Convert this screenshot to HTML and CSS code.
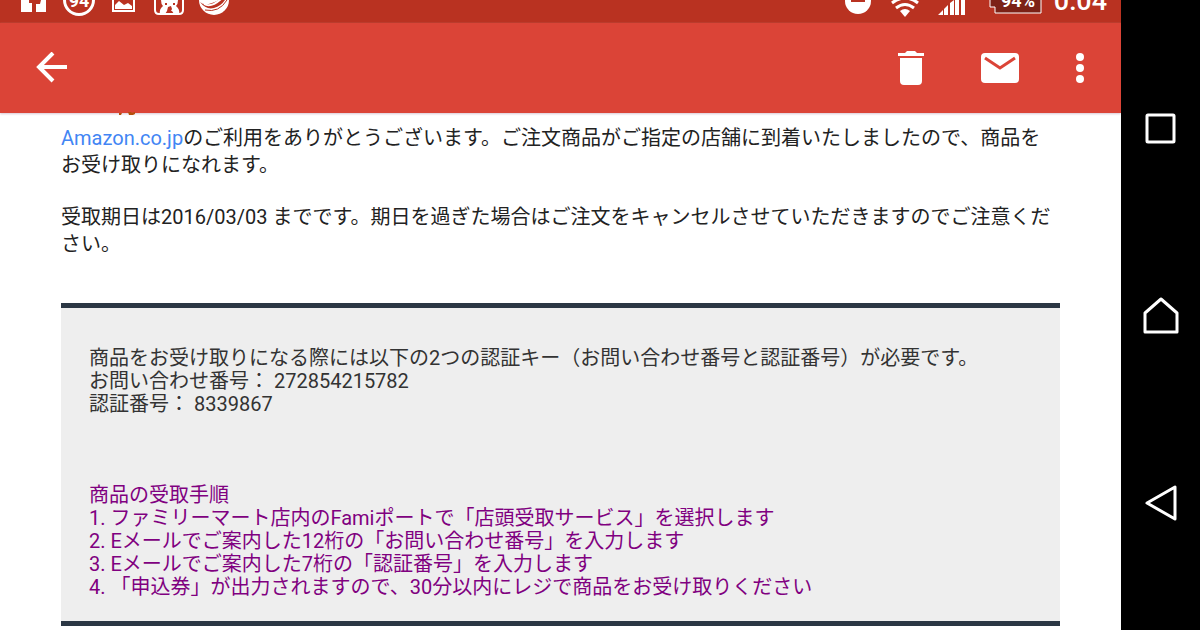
FILE: index.html
```html
<!DOCTYPE html>
<html lang="ja">
<head>
  <meta charset="UTF-8">
  <meta name="viewport" content="width=device-width, initial-scale=1.0">
  <title>Amazon.co.jp</title>
  <link rel="stylesheet" href="styles.css">
</head>
<body>
  <div class="screen">
    <div class="status-bar">
      <div class="notifications">
        <svg class="status-icon" viewBox="0 0 45 23">
          <path fill="#fff" d="M10 0h8v3h3v9H10zM25 12V4h4l1-4h5v12z"/>
        </svg>
        <svg class="status-icon" viewBox="0 0 45 23">
          <circle cx="23" cy="0" r="14.5" fill="none" stroke="#fff" stroke-width="3"/>
          <text class="badge-text" x="23" y="7" text-anchor="middle">94</text>
        </svg>
        <svg class="status-icon" viewBox="0 0 45 23">
          <path fill="none" stroke="#fff" stroke-width="2" d="M12 -8h21v19H12z"/>
          <path fill="#fff" d="M14 9V5l4-4 5 4 4-2 4 3v3z"/>
        </svg>
        <svg class="status-icon" viewBox="0 0 45 23">
          <path fill="none" stroke="#fff" stroke-width="2" d="M9 -4v14q0 4 4 4h20q4 0 4-4V-4"/>
          <path fill="#fff" d="M15 0h17q0 4-2 6 4 3 3 8h-5l-2-3h-5l-2 3h-5q-1-5 3-8-2-2-2-6z"/>
          <path fill="#b93221" d="M19 3h2v2h-2zM27 3h2v2h-2zM22 7l3-1 1 3-2 4-3-2z"/>
        </svg>
        <svg class="status-icon" viewBox="0 0 45 23">
          <circle cx="23" cy="0" r="15" fill="#fff"/>
          <path fill="#b93221" d="M9 2q4 4 12 1 8-3 10-5l3 2q-4 6-11 8-8 2-14-6z"/>
          <path fill="none" stroke="#b93221" stroke-width="1" d="M14 10q14 3 22-10"/>
          <path fill="none" stroke="#fff" stroke-width="2" d="M13 4q7 4 17-5"/>
        </svg>
      </div>
      <div class="system">
        <svg class="status-icon" viewBox="0 0 45 23">
          <circle cx="22" cy="1" r="13" fill="#fff"/>
          <path fill="#b93221" d="M15 -1h14v3H15z"/>
        </svg>
        <svg class="status-icon" viewBox="0 0 45 23">
          <path fill="#fff" d="M22 17l-5-6q5-4 10 0z"/>
          <path fill="none" stroke="#fff" stroke-width="3" d="M13 8q9-7 18 0M9 3q13-10 26 0"/>
        </svg>
        <svg class="status-icon" viewBox="0 0 45 23">
          <path fill="#fff" d="M8 15l5-5v5zM14 9l4-4v10h-4zM20 3l4-3v15h-4zM25 0h4v15h-4zM31 0h4v15h-4z"/>
        </svg>
        <svg class="battery-icon" viewBox="0 0 60 23">
          <path fill="#7c2116" stroke="#fff" stroke-width="1" d="M9 -1H4v8h5v6h46V-1"/>
          <text class="battery-text" x="32" y="7" text-anchor="middle">94%</text>
        </svg>
        <span class="clock">0:04</span>
      </div>
    </div>

    <header class="toolbar">
      <button class="tool" aria-label="戻る">
        <svg width="32" height="32" viewBox="0 0 32 32"><path fill="none" stroke="#fff" stroke-width="4" d="M32 15H5M18 1L4 15l14 14"/></svg>
      </button>
      <div class="actions">
        <button class="tool" aria-label="削除">
          <svg width="28" height="36" viewBox="0 0 28 36"><path fill="#fff" d="M1 3h7l2-2h8l2 2h7v3H1zM3 8h22v23q0 4-4 4H7q-4 0-4-4z"/></svg>
        </button>
        <button class="tool" aria-label="未読にする">
          <svg width="38" height="32" viewBox="0 0 38 32"><rect y="1" width="38" height="30" rx="4" fill="#fff"/><path fill="none" stroke="#db4437" stroke-width="3" d="M4 6l15 10L34 6"/></svg>
        </button>
        <button class="tool" aria-label="その他">
          <svg width="10" height="32" viewBox="0 0 10 32"><g fill="#fff"><circle cx="5" cy="5" r="4"/><circle cx="5" cy="16" r="4"/><circle cx="5" cy="27" r="4"/></g></svg>
        </button>
      </div>
      <!-- lower edge of the heading scrolled under the toolbar -->
      <svg class="scrolled-heading" viewBox="0 0 30 4"><path fill="#b5500c" d="M4 2h3l-1 2H4zM13 1h3l1 1 3-1v2l-2 1h-4z"/></svg>
    </header>

    <main class="mail">
      <p><a href="#">Amazon.co.jp</a>のご利用をありがとうございます。ご注文商品がご指定の店舗に到着いたしましたので、商品をお受け取りになれます。</p>
      <p>受取期日は2016/03/03 までです。期日を過ぎた場合はご注文をキャンセルさせていただきますのでご注意ください。</p>

      <section class="pickup">
        <p>商品をお受け取りになる際には以下の2つの認証キー（お問い合わせ番号と認証番号）が必要です。<br>
        お問い合わせ番号： 272854215782<br>
        認証番号： 8339867</p>
        <div class="steps">
          商品の受取手順<br>
          1. ファミリーマート店内のFamiポートで「店頭受取サービス」を選択します<br>
          2. Eメールでご案内した12桁の「お問い合わせ番号」を入力します<br>
          3. Eメールでご案内した7桁の「認証番号」を入力します<br>
          4. 「申込券」が出力されますので、30分以内にレジで商品をお受け取りください
        </div>
      </section>
    </main>
  </div>

  <nav class="nav-bar">
    <button class="nav-button" aria-label="アプリ履歴">
      <svg width="40" height="40" viewBox="0 0 40 40"><rect x="6" y="6" width="27" height="27" rx="1"/></svg>
    </button>
    <button class="nav-button" aria-label="ホーム">
      <svg width="40" height="40" viewBox="0 0 40 40"><path d="M20 3L4 17v19h32V17z"/></svg>
    </button>
    <button class="nav-button" aria-label="戻る">
      <svg width="40" height="40" viewBox="0 0 40 40"><path d="M34 4v32L6 20z"/></svg>
    </button>
  </nav>
</body>
</html>
```

FILE: styles.css
```css
* {
  box-sizing: border-box;
}
body {
  margin: 0;
  display: flex;
  height: 100vh;
  overflow: hidden;
  background: #000;
  font-family: Roboto, "Noto Sans CJK JP", sans-serif;
}
button {
  padding: 0;
  border: none;
  background: none;
  cursor: pointer;
}
svg {
  display: block;
}
.screen {
  flex: 1;
  background: #fff;
  overflow: hidden;
}
.status-bar {
  display: flex;
  justify-content: space-between;
  height: 23px;
  padding: 0 14px 0 11px;
  background: #b93221;
  overflow: hidden;
}
.notifications,
.system {
  display: flex;
  align-items: flex-end;
}
.system {
  gap: 2px;
}
.status-icon {
  width: 45px;
  height: 23px;
}
.battery-icon {
  width: 60px;
  height: 23px;
  margin-left: 9px;
}
.badge-text {
  font-size: 18px;
  font-weight: bold;
  fill: #fff;
}
.battery-text {
  font-size: 18px;
  font-weight: bold;
  fill: #fff;
}
.clock {
  margin-left: 6px;
  padding-bottom: 6px;
  font-size: 27px;
  font-weight: 500;
  line-height: 32px;
  color: #fff;
}
.toolbar {
  position: relative;
  display: flex;
  justify-content: space-between;
  align-items: center;
  height: 90px;
  padding: 0 36px 0 35px;
  background: #db4437;
  box-shadow: 0 1px 2px #d9c8d4;
}
.scrolled-heading {
  position: absolute;
  left: 115px;
  bottom: -2px;
  width: 30px;
  height: 4px;
}
.actions {
  display: flex;
  align-items: center;
}
.actions .tool {
  margin-left: 56px;
}
.mail {
  padding: 12px 61px 0;
  font-size: 20px;
  line-height: 27px;
  color: #222;
}
.mail p {
  margin: 0 0 25px;
}
.mail a {
  color: #4285f4;
  text-decoration: none;
}
.pickup {
  margin-top: 45px;
  padding: 39px 28px 22px;
  background: #eee;
  border-top: 5px solid #2b3744;
  border-bottom: 5px solid #2b3744;
  line-height: 23px;
  color: #333;
}
.pickup p {
  margin: 0 0 68px;
}
.steps {
  color: #800080;
}
.nav-bar {
  display: flex;
  flex-direction: column;
  justify-content: space-around;
  align-items: center;
  width: 79px;
  padding: 35px 0 33px;
  background: #000;
}
.nav-button svg {
  fill: none;
  stroke: #fff;
  stroke-width: 3;
  stroke-linejoin: round;
}
```
